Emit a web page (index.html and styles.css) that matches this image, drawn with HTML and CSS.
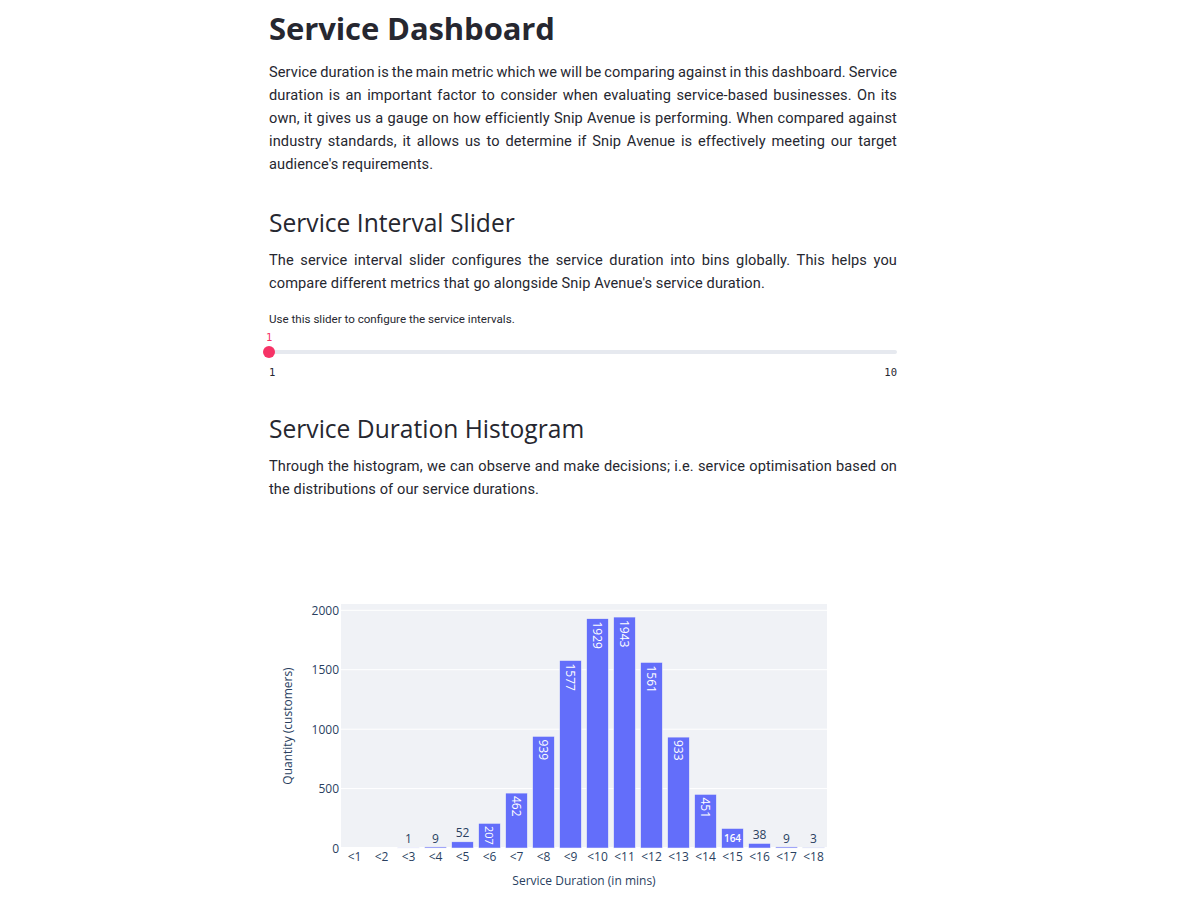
FILE: index.html
```html
<!DOCTYPE html>
<html lang="en">
<head>
<meta charset="utf-8">
<title>Service Dashboard</title>
<link rel="stylesheet" href="styles.css">
</head>
<body>
<main class="block">
  <h1 class="title">Service Dashboard</h1>
  <p class="text">
    <span class="ln">Service duration is the main metric which we will be comparing against in this dashboard. Service</span>
    <span class="ln">duration is an important factor to consider when evaluating service-based businesses. On its</span>
    <span class="ln">own, it gives us a gauge on how efficiently Snip Avenue is performing. When compared against</span>
    <span class="ln">industry standards, it allows us to determine if Snip Avenue is effectively meeting our target</span>
    <span class="ln-last">audience's requirements.</span>
  </p>

  <h2 class="heading">Service Interval Slider</h2>
  <p class="text">
    <span class="ln">The service interval slider configures the service duration into bins globally. This helps you</span>
    <span class="ln-last">compare different metrics that go alongside Snip Avenue's service duration.</span>
  </p>

  <div class="slider">
    <div class="slider-label">Use this slider to configure the service intervals.</div>
    <div class="slider-value">1</div>
    <div class="track"><span class="thumb"></span></div>
    <div class="ticks"><span>1</span><span>10</span></div>
  </div>

  <h2 class="heading heading-2">Service Duration Histogram</h2>
  <p class="text">
    <span class="ln">Through the histogram, we can observe and make decisions; i.e. service optimisation based on</span>
    <span class="ln-last">the distributions of our service durations.</span>
  </p>

  <figure class="chart">
    <svg class="chart-svg" width="628" height="400" viewBox="0 0 628 400" xmlns="http://www.w3.org/2000/svg">
      <rect class="plot-bg" x="72" y="103" width="486" height="244"/>
      <g class="grid">
        <line x1="72" x2="558" y1="109.3" y2="109.3"/>
        <line x1="72" x2="558" y1="168.7" y2="168.7"/>
        <line x1="72" x2="558" y1="228.2" y2="228.2"/>
        <line x1="72" x2="558" y1="287.6" y2="287.6"/>
        <line class="zero" x1="72" x2="558" y1="347" y2="347"/>
      </g>
      <g class="bars">
        <rect x="128.7" y="346.88" width="21.6" height="0.12"/>
        <rect x="155.7" y="345.93" width="21.6" height="1.07"/>
        <rect x="182.7" y="340.82" width="21.6" height="6.18"/>
        <rect x="209.7" y="322.4" width="21.6" height="24.6"/>
        <rect x="236.7" y="292.09" width="21.6" height="54.91"/>
        <rect x="263.7" y="235.4" width="21.6" height="111.6"/>
        <rect x="290.7" y="159.57" width="21.6" height="187.43"/>
        <rect x="317.7" y="117.74" width="21.6" height="229.26"/>
        <rect x="344.7" y="116.07" width="21.6" height="230.93"/>
        <rect x="371.7" y="161.47" width="21.6" height="185.53"/>
        <rect x="398.7" y="236.11" width="21.6" height="110.89"/>
        <rect x="425.7" y="293.4" width="21.6" height="53.6"/>
        <rect x="452.7" y="327.51" width="21.6" height="19.49"/>
        <rect x="479.7" y="342.48" width="21.6" height="4.52"/>
        <rect x="506.7" y="345.93" width="21.6" height="1.07"/>
        <rect x="533.7" y="346.64" width="21.6" height="0.36"/>
      </g>
      <g class="label-out">
        <text x="139.5" y="342">1</text>
        <text x="166.5" y="342">9</text>
        <text x="193.5" y="335.5">52</text>
        <text x="490.5" y="337.5">38</text>
        <text x="517.5" y="342">9</text>
        <text x="544.5" y="341.5">3</text>
      </g>
      <g class="label-in">
        <text class="small-rot" transform="translate(220.5 325) rotate(90)">207</text>
        <text transform="translate(247.5 295) rotate(90)">462</text>
        <text transform="translate(274.5 238.5) rotate(90)">939</text>
        <text transform="translate(301.5 162.5) rotate(90)">1577</text>
        <text transform="translate(328.5 120.5) rotate(90)">1929</text>
        <text transform="translate(355.5 119) rotate(90)">1943</text>
        <text transform="translate(382.5 164.5) rotate(90)">1561</text>
        <text transform="translate(409.5 239) rotate(90)">933</text>
        <text transform="translate(436.5 296.5) rotate(90)">451</text>
        <text class="tiny" x="463.5" y="340.5">164</text>
      </g>
      <g class="ytick">
        <text x="70" y="113.5">2000</text>
        <text x="70" y="173">1500</text>
        <text x="70" y="232.5">1000</text>
        <text x="70" y="292">500</text>
        <text x="70" y="351.5">0</text>
      </g>
      <g class="xtick">
        <text x="85.5" y="360">&lt;1</text>
        <text x="112.5" y="360">&lt;2</text>
        <text x="139.5" y="360">&lt;3</text>
        <text x="166.5" y="360">&lt;4</text>
        <text x="193.5" y="360">&lt;5</text>
        <text x="220.5" y="360">&lt;6</text>
        <text x="247.5" y="360">&lt;7</text>
        <text x="274.5" y="360">&lt;8</text>
        <text x="301.5" y="360">&lt;9</text>
        <text x="328.5" y="360">&lt;10</text>
        <text x="355.5" y="360">&lt;11</text>
        <text x="382.5" y="360">&lt;12</text>
        <text x="409.5" y="360">&lt;13</text>
        <text x="436.5" y="360">&lt;14</text>
        <text x="463.5" y="360">&lt;15</text>
        <text x="490.5" y="360">&lt;16</text>
        <text x="517.5" y="360">&lt;17</text>
        <text x="544.5" y="360">&lt;18</text>
      </g>
      <text class="axis-title" transform="translate(23 225) rotate(-90)">Quantity (customers)</text>
      <text class="axis-title" x="315" y="384">Service Duration (in mins)</text>
    </svg>
  </figure>
</main>
</body>
</html>
```

FILE: styles.css
```css
html, body {
  margin: 0;
  padding: 0;
  background: #ffffff;
}

body {
  font-family: Roboto, "Open Sans", sans-serif;
  color: #262730;
}

.block {
  width: 628px;
  margin-left: 269px;
  padding-top: 5px;
}

.title {
  margin: 0;
  font-family: "Open Sans", "Noto Sans", sans-serif;
  font-size: 31px;
  font-weight: 700;
  line-height: 46px;
  letter-spacing: -0.1px;
}

.text {
  margin: 9.5px 0 0;
  font-size: 14.6px;
  line-height: 23px;
  letter-spacing: 0.1px;
  word-spacing: -1.2px;
}

.text .ln {
  display: block;
  text-align: justify;
  text-align-last: justify;
}

.text .ln-last {
  display: block;
  word-spacing: 0;
}

.heading {
  margin: 29.5px 0 0;
  font-family: "Open Sans", "Noto Sans", sans-serif;
  font-size: 24.6px;
  font-weight: 400;
  line-height: 36px;
}

.heading + .text {
  margin-top: 7.5px;
}

.heading-2 {
  margin-top: 32px;
}

.slider {
  margin-top: 16.5px;
}

.slider-label {
  font-size: 11.6px;
  line-height: 16px;
}

.slider-value {
  margin-top: 3px;
  margin-left: -3px;
  font-family: "DejaVu Sans Mono", monospace;
  font-size: 10.5px;
  line-height: 14px;
  color: #f63366;
}

.track {
  position: relative;
  margin-top: 2px;
  height: 12px;
  display: flex;
  align-items: center;
}

.track::before {
  content: "";
  display: block;
  width: 100%;
  height: 4px;
  border-radius: 2px;
  background: #e6e9ef;
}

.thumb {
  position: absolute;
  left: -6px;
  top: 0;
  width: 12px;
  height: 12px;
  border-radius: 50%;
  background: #f63366;
}

.ticks {
  margin-top: 7px;
  display: flex;
  justify-content: space-between;
  font-family: "DejaVu Sans Mono", monospace;
  font-size: 10.5px;
  line-height: 14px;
}

.chart {
  margin: 0;
  height: 406px;
}

.chart-svg {
  display: block;
  font-family: "Open Sans", "Noto Sans", sans-serif;
}

.plot-bg {
  fill: #f0f2f6;
}

.grid line {
  stroke: #ffffff;
  stroke-width: 1;
}

.grid .zero {
  stroke-width: 2;
}

.bars rect {
  fill: #636efa;
  stroke: #f0f2f6;
  stroke-width: 0.5;
}

.label-out text {
  font-size: 12px;
  fill: #2a3f5f;
  text-anchor: middle;
}

.label-in text {
  font-size: 12px;
  fill: #ffffff;
  dominant-baseline: central;
}

.label-in .small-rot {
  font-size: 11px;
}

.label-in .tiny {
  font-size: 10px;
  font-weight: 600;
  text-anchor: middle;
  dominant-baseline: auto;
}

.ytick text {
  font-size: 12px;
  fill: #2a3f5f;
  text-anchor: end;
}

.xtick text {
  font-size: 12px;
  fill: #2a3f5f;
  text-anchor: middle;
}

.axis-title {
  font-size: 12px;
  fill: #2a3f5f;
  text-anchor: middle;
}
```
